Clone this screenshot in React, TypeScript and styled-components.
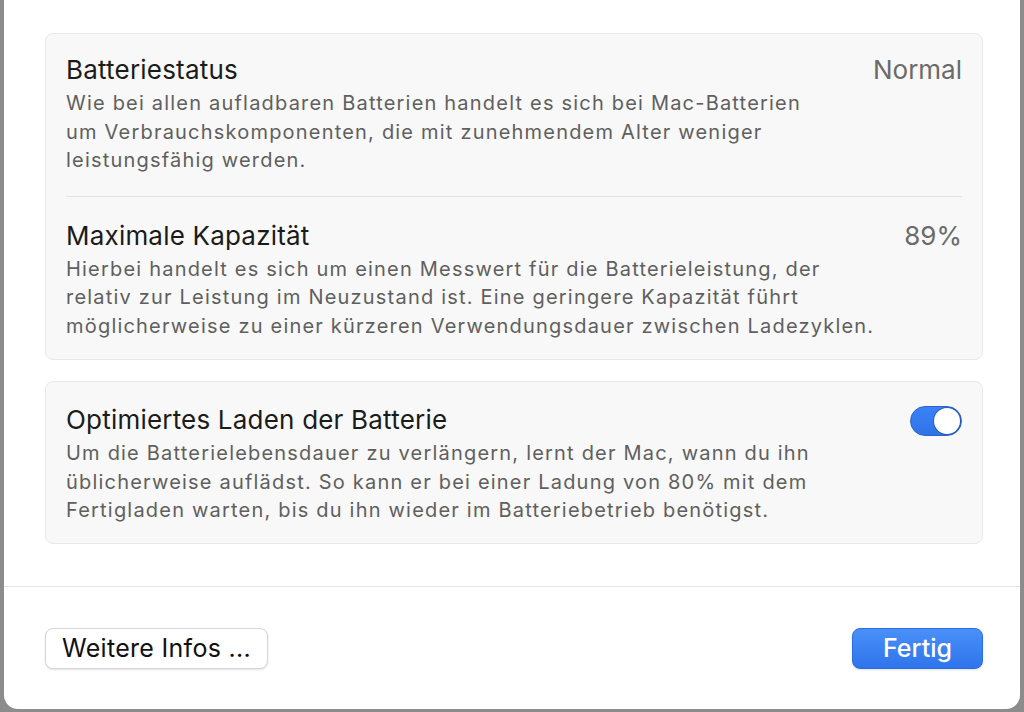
import styled, { createGlobalStyle } from "styled-components";

const GlobalStyle = createGlobalStyle`
  html, body {
    margin: 0;
    padding: 0;
    background: #8c8c8c;
    overflow: hidden;
  }
  body {
    font-family: Inter, "Noto Sans", "Liberation Sans", sans-serif;
  }
`;

const Window = styled.div`
  margin: -20px 0 0 4px;
  width: 1016px;
  height: 729px;
  background: #ffffff;
  border-radius: 14px;
  box-sizing: border-box;
  display: flex;
  flex-direction: column;
`;

const Content = styled.div`
  display: flex;
  flex-direction: column;
  gap: 21px;
  padding: 53px 37px 42px 41px;
`;

const Card = styled.div`
  background: #f8f8f8;
  border: 1px solid #e8e8e8;
  border-radius: 8px;
  padding: 0 20px;
`;

const Row = styled.div<{ $top: number; $bottom: number; $divider?: boolean }>`
  display: flex;
  justify-content: space-between;
  align-items: flex-start;
  gap: 24px;
  padding: ${(p) => p.$top}px 0 ${(p) => p.$bottom}px;
  border-bottom: ${(p) => (p.$divider ? "1px solid #e2e2e2" : "none")};
`;

const TextBlock = styled.div`
  display: flex;
  flex-direction: column;
  gap: 5px;
`;

const Title = styled.div`
  font-size: 26px;
  line-height: 28px;
  letter-spacing: 0.2px;
  color: #1b1b1b;
`;

const Description = styled.div`
  font-size: 20px;
  line-height: 28.5px;
  letter-spacing: 1.2px;
  color: #5f5f5f;
  white-space: nowrap;
`;

const Value = styled.div`
  font-size: 26px;
  line-height: 28px;
  color: #6a6a6a;
  white-space: nowrap;
`;

const Toggle = styled.div`
  flex: none;
  width: 52px;
  height: 30px;
  border-radius: 15px;
  background: linear-gradient(#3b82f6, #2f72e8);
  border: 1px solid #2a62c6;
  box-sizing: border-box;
  display: flex;
  justify-content: flex-end;
  align-items: center;
  padding: 1px;
`;

const Knob = styled.div`
  width: 26px;
  height: 26px;
  border-radius: 50%;
  background: #ffffff;
  box-shadow: 0 0 0 1px rgba(20, 60, 140, 0.45);
`;

const Footer = styled.div`
  border-top: 1px solid #e4e4e4;
  display: flex;
  justify-content: space-between;
  align-items: center;
  padding: 41px 37px 0 41px;
`;

const Button = styled.button<{ $primary?: boolean }>`
  height: 41px;
  padding: 0 16px;
  border-radius: 8px;
  font-family: Inter, "Noto Sans", "Liberation Sans", sans-serif;
  font-size: 25px;
  letter-spacing: ${(p) => (p.$primary ? "0" : "0.3px")};
  cursor: pointer;
  border: 1px solid ${(p) => (p.$primary ? "#2c6ee0" : "#d6d6d6")};
  background: ${(p) =>
    p.$primary ? "linear-gradient(#4a90f8, #2f74ec)" : "#ffffff"};
  color: ${(p) => (p.$primary ? "#ffffff" : "#111111")};
  font-weight: ${(p) => (p.$primary ? 500 : 400)};
  box-shadow: 0 1px 2px rgba(0, 0, 0, 0.12);
  min-width: ${(p) => (p.$primary ? "131px" : "0")};
`;

export default function App() {
  return (
    <>
      <GlobalStyle />
      <Window>
        <Content>
          <Card>
            <Row $top={22} $bottom={21} $divider>
              <TextBlock>
                <Title>Batteriestatus</Title>
                <Description>
                  Wie bei allen aufladbaren Batterien handelt es sich bei Mac-Batterien
                  <br />
                  um Verbrauchskomponenten, die mit zunehmendem Alter weniger
                  <br />
                  leistungsfähig werden.
                </Description>
              </TextBlock>
              <Value>Normal</Value>
            </Row>
            <Row $top={25} $bottom={19}>
              <TextBlock>
                <Title>Maximale Kapazität</Title>
                <Description>
                  Hierbei handelt es sich um einen Messwert für die Batterieleistung, der
                  <br />
                  relativ zur Leistung im Neuzustand ist. Eine geringere Kapazität führt
                  <br />
                  möglicherweise zu einer kürzeren Verwendungsdauer zwischen Ladezyklen.
                </Description>
              </TextBlock>
              <Value>89%</Value>
            </Row>
          </Card>
          <Card>
            <Row $top={24} $bottom={18}>
              <TextBlock>
                <Title>Optimiertes Laden der Batterie</Title>
                <Description>
                  Um die Batterielebensdauer zu verlängern, lernt der Mac, wann du ihn
                  <br />
                  üblicherweise auflädst. So kann er bei einer Ladung von 80% mit dem
                  <br />
                  Fertigladen warten, bis du ihn wieder im Batteriebetrieb benötigst.
                </Description>
              </TextBlock>
              <Toggle>
                <Knob />
              </Toggle>
            </Row>
          </Card>
        </Content>
        <Footer>
          <Button>Weitere Infos ...</Button>
          <Button $primary>Fertig</Button>
        </Footer>
      </Window>
    </>
  );
}
